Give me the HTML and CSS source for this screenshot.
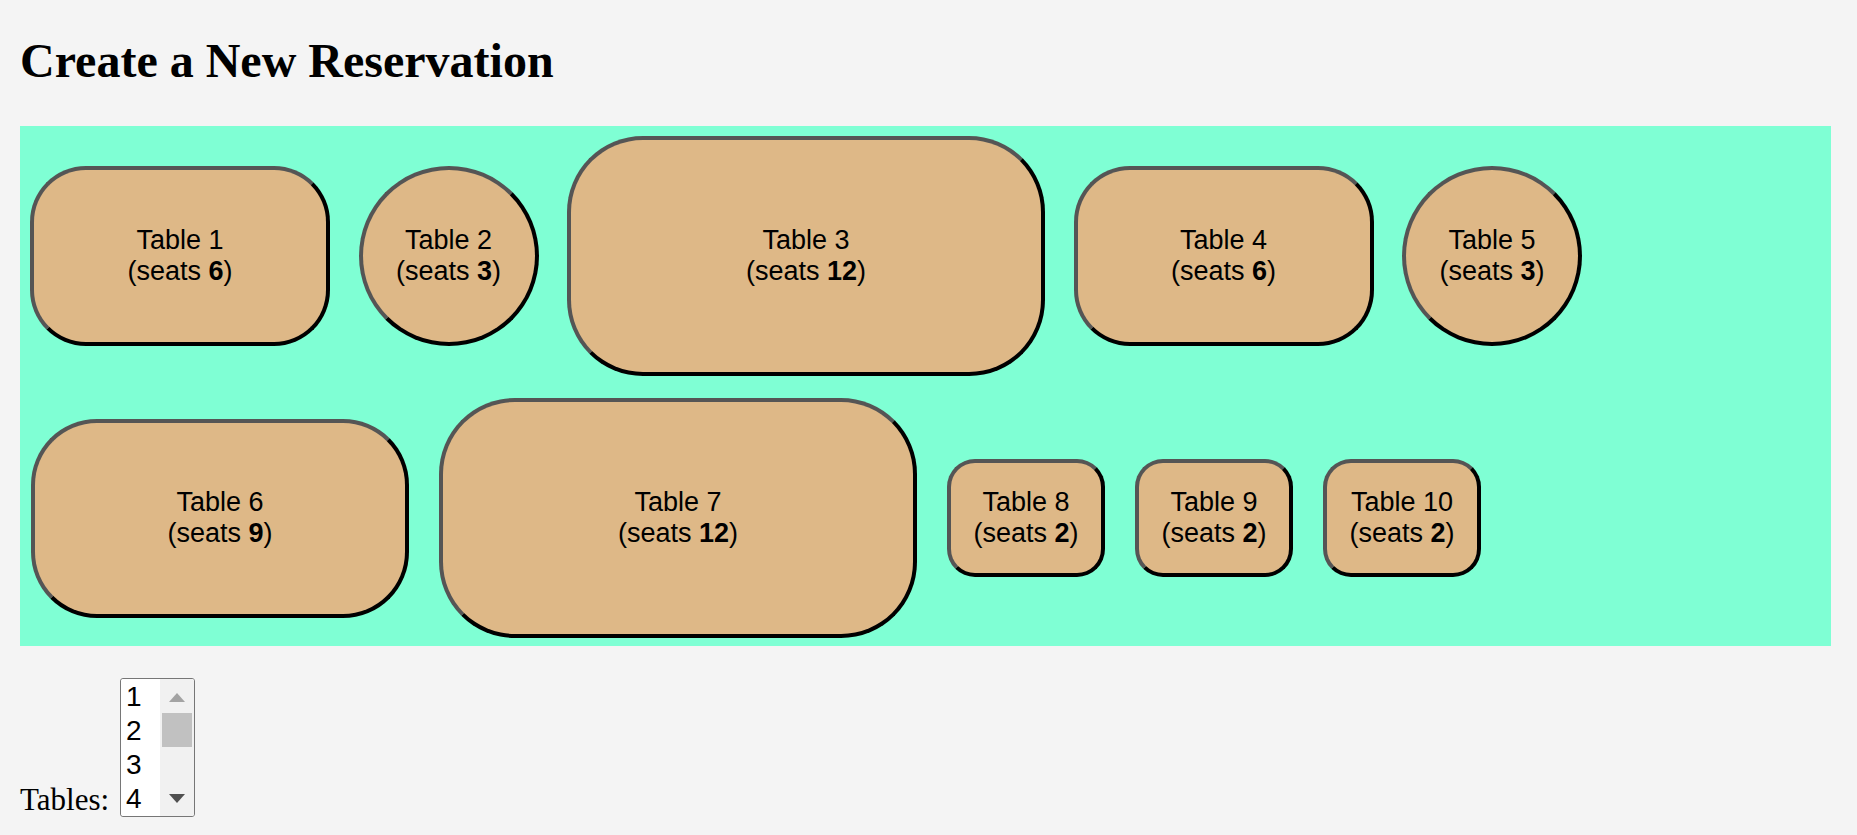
FILE: index.html
```html
<!DOCTYPE html>
<html lang="en">
<head>
  <meta charset="UTF-8">
  <title>Create a New Reservation</title>
  <link rel="stylesheet" href="styles.css">
</head>
<body>

  <h1>Create a New Reservation</h1>

  <div class="floor">
    <div class="floor-row first">
      <div class="table seats-6"><span>Table 1<br>(seats <b>6</b>)</span></div>
      <div class="table seats-3"><span>Table 2<br>(seats <b>3</b>)</span></div>
      <div class="table seats-12"><span>Table 3<br>(seats <b>12</b>)</span></div>
      <div class="table seats-6"><span>Table 4<br>(seats <b>6</b>)</span></div>
      <div class="table seats-3"><span>Table 5<br>(seats <b>3</b>)</span></div>
    </div>
    <div class="floor-row second">
      <div class="table seats-9"><span>Table 6<br>(seats <b>9</b>)</span></div>
      <div class="table seats-12"><span>Table 7<br>(seats <b>12</b>)</span></div>
      <div class="table seats-2"><span>Table 8<br>(seats <b>2</b>)</span></div>
      <div class="table seats-2"><span>Table 9<br>(seats <b>2</b>)</span></div>
      <div class="table seats-2"><span>Table 10<br>(seats <b>2</b>)</span></div>
    </div>
  </div>

  <form class="picker">
    <label for="table-select">Tables:</label>
    <div class="listbox">
      <select id="table-select" size="4" multiple>
        <option>1</option>
        <option>2</option>
        <option>3</option>
        <option>4</option>
        <option>5</option>
        <option>6</option>
        <option>7</option>
        <option>8</option>
        <option>9</option>
        <option>10</option>
      </select>
      <div class="scrollbar">
        <svg class="arrow" width="16" height="9" viewBox="0 0 16 9"><path d="M0 9 L8 0 L16 9 Z" fill="#a3a3a3"/></svg>
        <div class="thumb"></div>
        <svg class="arrow down" width="16" height="9" viewBox="0 0 16 9"><path d="M0 0 L16 0 L8 9 Z" fill="#505050"/></svg>
      </div>
    </div>
  </form>

</body>
</html>
```

FILE: styles.css
```css
body {
  margin: 0;
  padding: 0 20px;
  background: #f4f4f4;
  font-family: "Liberation Serif", "Times New Roman", serif;
}
h1 {
  margin: 33px 0 38px;
  font-size: 48px;
  line-height: 55px;
  font-weight: bold;
  color: #000;
}
.floor {
  width: 1811px;
  height: 520px;
  box-sizing: border-box;
  padding: 10px 0 8px 10px;
  background: #7fffd4;
}
.floor-row {
  display: flex;
  align-items: center;
  height: 240px;
}
.floor-row.first {
  gap: 28.5px;
}
.floor-row.second {
  gap: 30px;
  margin-top: 22px;
  padding-left: 1px;
}
.table {
  display: flex;
  align-items: center;
  justify-content: center;
  flex: none;
  box-sizing: border-box;
  background: #deb887;
  border: 4px solid;
  border-color: #555 #000 #000 #555;
  font-family: "Liberation Sans", Arial, sans-serif;
  font-size: 27px;
  line-height: 31px;
  text-align: center;
  color: #000;
}
.seats-2 {
  width: 158px;
  height: 118px;
  border-radius: 28px;
}
.seats-3 {
  width: 180px;
  height: 180px;
  border-radius: 50%;
}
.seats-6 {
  width: 300px;
  height: 180px;
  border-radius: 56px;
}
.seats-9 {
  width: 378px;
  height: 199px;
  border-radius: 66px;
}
.seats-12 {
  width: 478px;
  height: 240px;
  border-radius: 76px;
}
.picker {
  display: flex;
  align-items: flex-end;
  margin-top: 32px;
}
label {
  font-size: 31px;
  line-height: 34px;
  margin-right: 11px;
}
.listbox {
  display: flex;
  width: 75px;
  height: 139px;
  box-sizing: border-box;
  border: 1.5px solid #767676;
  border-radius: 3px;
  background: #fff;
  overflow: hidden;
}
select {
  width: 39px;
  height: 100%;
  margin: 0;
  padding: 0;
  border: none;
  outline: none;
  background: #fff;
  overflow: hidden;
  scrollbar-width: none;
  font-family: "Liberation Sans", Arial, sans-serif;
  font-size: 28px;
  color: #000;
}
option {
  padding: 2px 0 0 5px;
  line-height: 32px;
  min-height: 0;
}
.scrollbar {
  flex: 1;
  display: flex;
  flex-direction: column;
  align-items: center;
  background: #f1f1f1;
}
.arrow {
  margin-top: 14px;
  flex: none;
}
.arrow.down {
  margin-top: auto;
  margin-bottom: 13px;
}
.thumb {
  width: 30px;
  height: 34px;
  margin-top: 11px;
  background: #c1c1c1;
}
```
